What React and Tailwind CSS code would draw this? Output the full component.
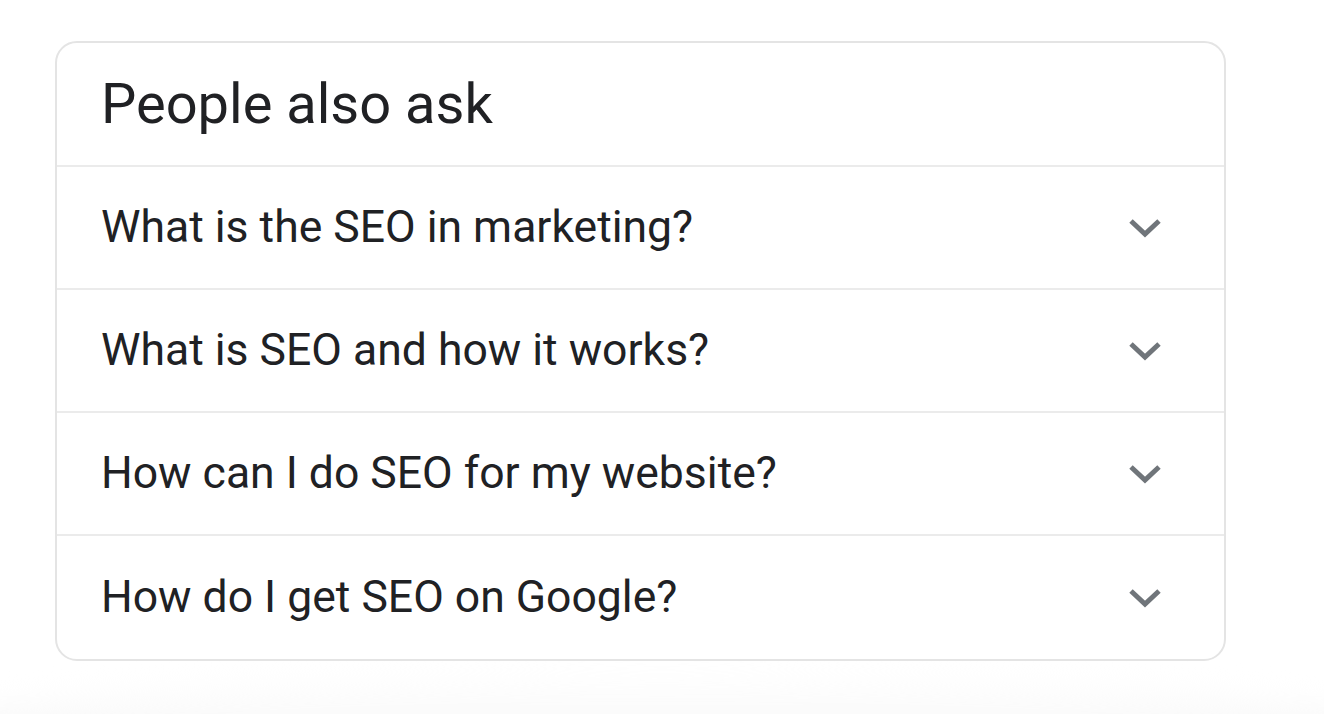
import React from "react";

const questions = [
  "What is the SEO in marketing?",
  "What is SEO and how it works?",
  "How can I do SEO for my website?",
  "How do I get SEO on Google?",
];

function Chevron() {
  return (
    <svg width="34" height="22" viewBox="0 0 34 22" fill="none" className="shrink-0">
      <path d="M3 4 L17 17 L31 4" stroke="#70757a" strokeWidth="5" strokeLinejoin="miter" />
    </svg>
  );
}

export default function App() {
  return (
    <div className="w-[1324px] h-[714px] bg-white overflow-hidden relative" style={{ fontFamily: "Roboto, Arial, sans-serif" }}>
      {/* faint shadow of the next card */}
      <div className="absolute left-[-100px] right-[-100px] top-[672px] h-[120px] rounded-[50%] bg-gradient-to-b from-white to-[#f3f3f3] blur-md" />

      <div className="relative ml-[55px] mt-[41px] w-[1171px] bg-white border-2 border-[#e4e4e4] rounded-[22px]">
        <div className="h-[124px] flex items-center pl-[44px] border-b-2 border-[#ebebeb]">
          <h2 className="text-[56px] text-[#202124] leading-none">People also ask</h2>
        </div>
        {questions.map((q, i) => (
          <div
            key={q}
            className={`h-[123px] flex items-center justify-between pl-[44px] pr-[62px] ${i < questions.length - 1 ? "border-b-2 border-[#ebebeb]" : ""}`}
          >
            <span className="text-[44.5px] text-[#202124] leading-none">{q}</span>
            <Chevron />
          </div>
        ))}
      </div>
    </div>
  );
}
